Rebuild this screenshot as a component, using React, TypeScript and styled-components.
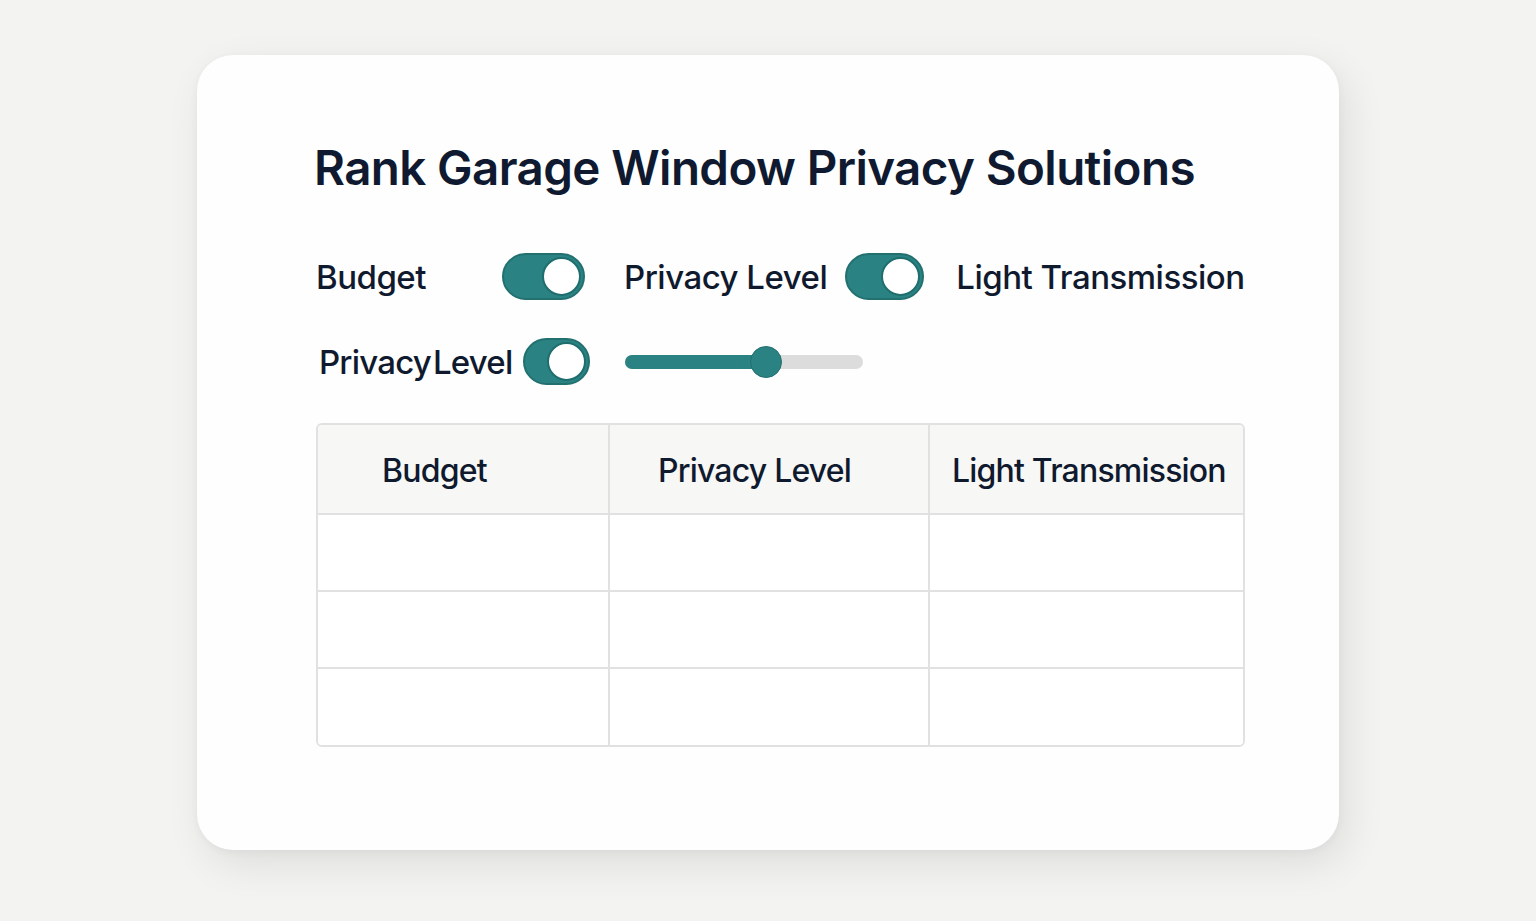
import React from "react";
import styled, { createGlobalStyle } from "styled-components";

const Global = createGlobalStyle`
  html, body { margin: 0; padding: 0; }
  body {
    background: #f3f3f2;
    font-family: Inter, "Noto Sans", sans-serif;
    color: #101a2e;
  }
`;

const Page = styled.div`
  width: 1536px;
  height: 921px;
  padding: 55px 0 0 197px;
  box-sizing: border-box;
`;

const Card = styled.div`
  width: 1142px;
  height: 795px;
  box-sizing: border-box;
  background: #fefefe;
  border-radius: 36px;
  box-shadow: 8px 14px 40px rgba(0, 0, 0, 0.09), 0 2px 8px rgba(0, 0, 0, 0.04);
  padding: 89px 0 0 117px;
  display: flex;
  flex-direction: column;
`;

const Title = styled.h1`
  margin: 0;
  font-size: 47.5px;
  font-weight: 600;
  letter-spacing: -0.6px;
  line-height: 1;
  color: #0f1a30;
`;

const Controls = styled.div`
  display: flex;
  flex-direction: column;
  gap: 37px;
  margin-top: 61px;
  margin-left: 2px;
`;

const ControlRow = styled.div`
  display: flex;
  align-items: center;
  height: 48px;
`;

const Label = styled.span<{ $w?: number; $ml?: number; $tight?: boolean }>`
  font-size: 33px;
  font-weight: 500;
  letter-spacing: ${(p) => (p.$tight ? "-0.8px" : "-0.5px")};
  word-spacing: ${(p) => (p.$tight ? "-6px" : "0")};
  color: #101a2e;
  width: ${(p) => (p.$w ? `${p.$w}px` : "auto")};
  margin-left: ${(p) => p.$ml ?? 0}px;
  white-space: nowrap;
`;

const Toggle = styled.div<{ $w: number; $ml?: number }>`
  width: ${(p) => p.$w}px;
  height: 47px;
  margin-left: ${(p) => p.$ml ?? 0}px;
  border-radius: 24px;
  background: #2a8282;
  border: 2px solid #22706f;
  box-sizing: border-box;
  display: flex;
  align-items: center;
  justify-content: flex-end;
  padding-right: 2px;
  flex-shrink: 0;
`;

const Knob = styled.div`
  width: 39px;
  height: 39px;
  border-radius: 50%;
  background: #ffffff;
  border: 2px solid #1f6e6e;
  box-sizing: border-box;
`;

const Slider = styled.div<{ $ml: number }>`
  position: relative;
  width: 238px;
  height: 14px;
  margin-left: ${(p) => p.$ml}px;
  border-radius: 7px;
  background: #dcdcdc;
`;

const SliderFill = styled.div`
  height: 100%;
  border-radius: 7px;
  background: #2a8282;
`;

const SliderThumb = styled.div`
  position: absolute;
  top: 50%;
  width: 32px;
  height: 32px;
  margin: -16px 0 0 -16px;
  border-radius: 50%;
  background: #2a8282;
  border: 1px solid #22706f;
  box-sizing: border-box;
`;

const Table = styled.div`
  margin-top: 37px;
  margin-left: 2px;
  width: 929px;
  border: 2px solid #e1e1e1;
  border-radius: 6px;
  overflow: hidden;
  display: grid;
  grid-template-columns: 292px 320px 1fr;
  grid-template-rows: 90px 77px 77px 76px;
  box-sizing: border-box;
`;

const HeadCell = styled.div<{ $pl: number; $last?: boolean }>`
  background: #f7f7f6;
  border-right: ${(p) => (p.$last ? "none" : "2px solid #e1e1e1")};
  border-bottom: 2px solid #e1e1e1;
  display: flex;
  align-items: center;
  padding: 3px 0 0 ${(p) => p.$pl}px;
  font-size: 32px;
  font-weight: 500;
  letter-spacing: -0.8px;
  color: #101a2e;
  white-space: nowrap;
`;

const Cell = styled.div<{ $last?: boolean; $bottom?: boolean }>`
  background: #ffffff;
  border-right: ${(p) => (p.$last ? "none" : "2px solid #e1e1e1")};
  border-bottom: ${(p) => (p.$bottom ? "none" : "2px solid #e1e1e1")};
`;

const headers = [
  { text: "Budget", pl: 64 },
  { text: "Privacy Level", pl: 48 },
  { text: "Light Transmission", pl: 22 },
];

export default function App() {
  const value = 0.59;
  return (
    <>
      <Global />
      <Page>
        <Card>
          <Title>Rank Garage Window Privacy Solutions</Title>
          <Controls>
            <ControlRow>
              <Label $w={186}>Budget</Label>
              <Toggle $w={83}>
                <Knob />
              </Toggle>
              <Label $ml={39}>Privacy Level</Label>
              <Toggle $w={79} $ml={18}>
                <Knob />
              </Toggle>
              <Label $ml={32}>Light Transmission</Label>
            </ControlRow>
            <ControlRow>
              <Label $ml={3} $tight>
                Privacy Level
              </Label>
              <Toggle $w={67} $ml={11}>
                <Knob />
              </Toggle>
              <Slider $ml={35}>
                <SliderFill style={{ width: `${value * 100}%` }} />
                <SliderThumb style={{ left: `${value * 100}%` }} />
              </Slider>
            </ControlRow>
          </Controls>
          <Table>
            {headers.map((h, i) => (
              <HeadCell key={h.text} $pl={h.pl} $last={i === 2}>
                {h.text}
              </HeadCell>
            ))}
            {[0, 1, 2].map((r) =>
              [0, 1, 2].map((c) => (
                <Cell key={`${r}-${c}`} $last={c === 2} $bottom={r === 2} />
              ))
            )}
          </Table>
        </Card>
      </Page>
    </>
  );
}
